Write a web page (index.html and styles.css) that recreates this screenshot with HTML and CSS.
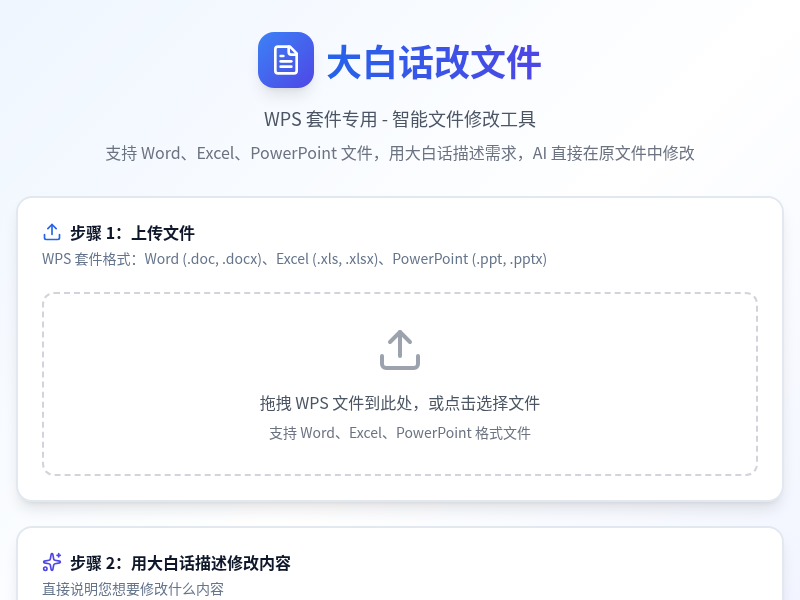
FILE: index.html
```html
<!DOCTYPE html>
<html lang="zh-CN">
<head>
    <meta charset="UTF-8">
    <meta name="viewport" content="width=device-width, initial-scale=1.0">
    <title>大白话改文件</title>
    <link rel="stylesheet" href="styles.css">
</head>
<body>
    <div class="page">
        <header class="header">
            <div class="brand">
                <div class="brand-icon">
                    <svg width="32" height="32" viewBox="0 0 24 24" fill="none" stroke="#fff" stroke-width="2" stroke-linecap="round" stroke-linejoin="round">
                        <path d="M15 2H6a2 2 0 0 0-2 2v16a2 2 0 0 0 2 2h12a2 2 0 0 0 2-2V7Z"/>
                        <path d="M14 2v4a2 2 0 0 0 2 2h4"/>
                        <path d="M10 9H8"/>
                        <path d="M16 13H8"/>
                        <path d="M16 17H8"/>
                    </svg>
                </div>
                <h1 class="brand-title">大白话改文件</h1>
            </div>
            <p class="subtitle">WPS 套件专用 - 智能文件修改工具</p>
            <p class="intro">支持 Word、Excel、PowerPoint 文件，用大白话描述需求，AI 直接在原文件中修改</p>
        </header>

        <section class="card">
            <h2 class="card-title">
                <svg class="card-icon" width="20" height="20" viewBox="0 0 24 24" fill="none" stroke="#2563eb" stroke-width="2" stroke-linecap="round" stroke-linejoin="round">
                    <path d="M21 15v4a2 2 0 0 1-2 2H5a2 2 0 0 1-2-2v-4"/>
                    <polyline points="17 8 12 3 7 8"/>
                    <line x1="12" y1="3" x2="12" y2="15"/>
                </svg>
                步骤 1：上传文件
            </h2>
            <p class="card-desc">WPS 套件格式：Word (.doc, .docx)、Excel (.xls, .xlsx)、PowerPoint (.ppt, .pptx)</p>
            <div class="dropzone">
                <svg class="drop-icon" width="48" height="48" viewBox="0 0 24 24" fill="none" stroke="#9ca3af" stroke-width="2" stroke-linecap="round" stroke-linejoin="round">
                    <path d="M21 15v4a2 2 0 0 1-2 2H5a2 2 0 0 1-2-2v-4"/>
                    <polyline points="17 8 12 3 7 8"/>
                    <line x1="12" y1="3" x2="12" y2="15"/>
                </svg>
                <p class="drop-text">拖拽 WPS 文件到此处，或点击选择文件</p>
                <p class="drop-hint">支持 Word、Excel、PowerPoint 格式文件</p>
            </div>
        </section>

        <section class="card">
            <h2 class="card-title">
                <svg class="card-icon" width="20" height="20" viewBox="0 0 24 24" fill="none" stroke="#4f46e5" stroke-width="2" stroke-linecap="round" stroke-linejoin="round">
                    <path d="M11.017 2.814a1 1 0 0 1 1.966 0l1.051 5.558a2 2 0 0 0 1.594 1.594l5.558 1.051a1 1 0 0 1 0 1.966l-5.558 1.051a2 2 0 0 0-1.594 1.594l-1.051 5.558a1 1 0 0 1-1.966 0l-1.051-5.558a2 2 0 0 0-1.594-1.594l-5.558-1.051a1 1 0 0 1 0-1.966l5.558-1.051a2 2 0 0 0 1.594-1.594z"/>
                    <path d="M20 2v4"/>
                    <path d="M22 4h-4"/>
                    <circle cx="4" cy="20" r="2"/>
                </svg>
                步骤 2：用大白话描述修改内容
            </h2>
            <p class="card-desc">直接说明您想要修改什么内容</p>
        </section>
    </div>
</body>
</html>
```

FILE: styles.css
```css
* {
    box-sizing: border-box;
}

html, body {
    height: 100%;
    overflow: hidden;
}

body {
    margin: 0;
    font-family: "Noto Sans CJK SC", "Noto Sans", sans-serif;
    background: linear-gradient(135deg, #eff6ff 0%, #ffffff 50%, #eef2ff 100%) no-repeat;
    background-size: 100% 800px;
    color: #111827;
}

.page {
    padding: 32px 16px;
    will-change: transform;
}

.header {
    text-align: center;
    margin-bottom: 32px;
}

.brand {
    display: flex;
    justify-content: center;
    align-items: center;
    gap: 12px;
    margin-bottom: 16px;
}

.brand-icon {
    width: 56px;
    height: 56px;
    border-radius: 16px;
    background: linear-gradient(135deg, #3b82f6, #4f46e5);
    box-shadow: 0 10px 15px -3px rgba(0, 0, 0, 0.1), 0 4px 6px -4px rgba(0, 0, 0, 0.1);
    display: flex;
    justify-content: center;
    align-items: center;
}

.brand-title {
    margin: 0;
    font-size: 36px;
    line-height: 40px;
    font-weight: 700;
    background: linear-gradient(90deg, #2563eb, #4f46e5);
    -webkit-background-clip: text;
    background-clip: text;
    color: transparent;
}

.subtitle {
    margin: 0 0 8px;
    font-size: 18px;
    line-height: 28px;
    color: #4b5563;
}

.intro {
    margin: 0;
    font-size: 16px;
    line-height: 24px;
    color: #6b7280;
}

.card {
    background: #fff;
    border: 2px solid #e2e8f0;
    border-radius: 16px;
    padding: 24px;
    margin-bottom: 24px;
    box-shadow: 0 10px 15px -3px rgba(0, 0, 0, 0.1), 0 4px 6px -4px rgba(0, 0, 0, 0.1);
}

.card-title {
    display: flex;
    align-items: center;
    gap: 8px;
    margin: 0 0 6px;
    font-size: 16px;
    line-height: 20px;
    font-weight: 700;
    color: #0f172a;
}

.card-icon {
    flex: none;
}

.card-desc {
    margin: 0;
    font-size: 14px;
    line-height: 20px;
    color: #64748b;
}

.dropzone {
    margin-top: 24px;
    height: 184px;
    border: 2px dashed #d1d5db;
    border-radius: 12px;
    display: flex;
    flex-direction: column;
    align-items: center;
    justify-content: center;
    text-align: center;
}

.drop-icon {
    margin-bottom: 16px;
}

.drop-text {
    margin: 0 0 8px;
    font-size: 16px;
    line-height: 24px;
    color: #4b5563;
}

.drop-hint {
    margin: 0;
    font-size: 14px;
    line-height: 20px;
    color: #6b7280;
}
```
